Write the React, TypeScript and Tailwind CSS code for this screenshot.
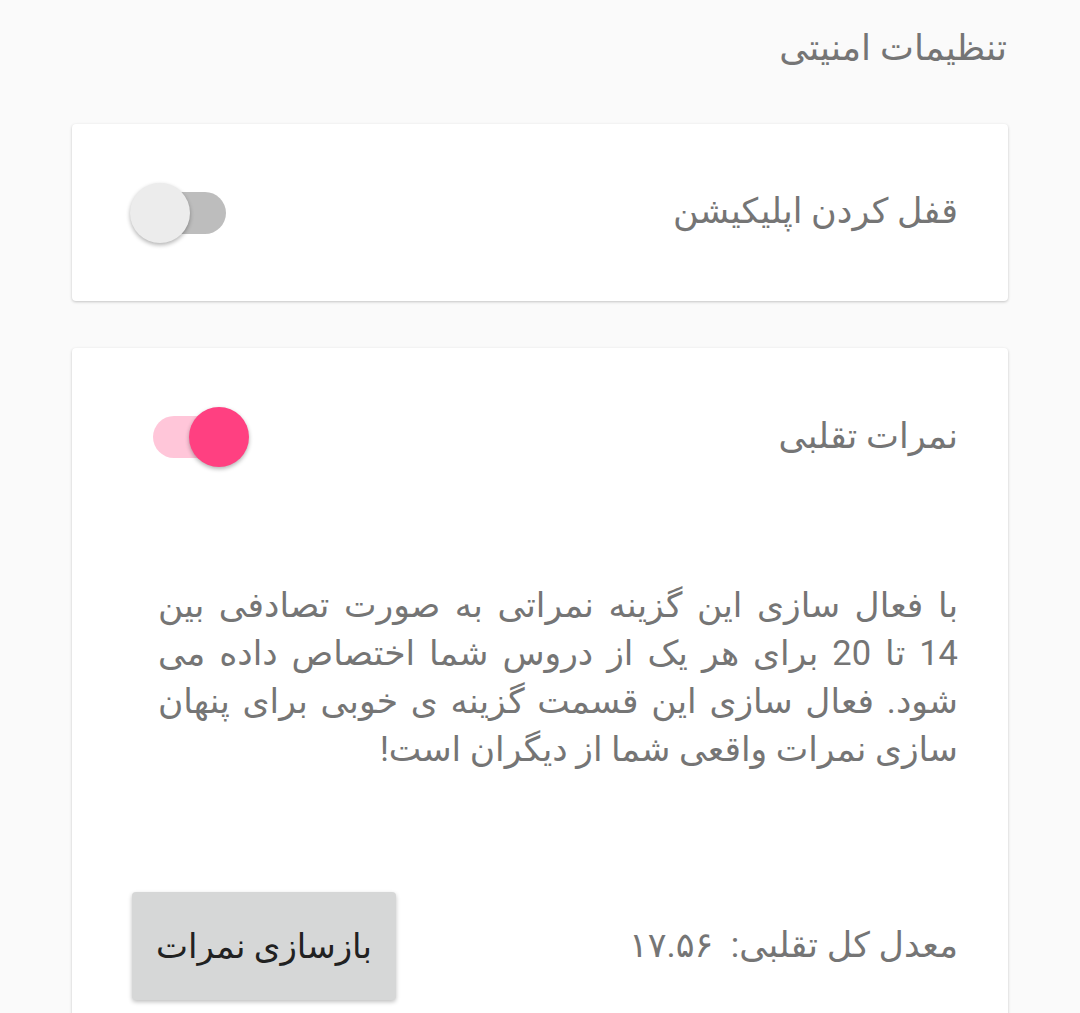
const Toggle = ({ on }: { on: boolean }) => {
  if (on) {
    return (
      <div className="relative w-[96px] h-[60px] shrink-0">
        <div className="absolute left-0 top-[9px] w-[91px] h-[42px] rounded-full bg-[#ffc6d9]" />
        <div className="absolute right-0 top-0 w-[60px] h-[60px] rounded-full bg-[#ff4081] shadow-[0_2px_4px_rgba(0,0,0,0.3)]" />
      </div>
    );
  }
  return (
    <div className="relative w-[96px] h-[60px] shrink-0">
      <div className="absolute right-0 top-[9px] w-[91px] h-[42px] rounded-full bg-[#bdbdbd]" />
      <div className="absolute left-0 top-0 w-[60px] h-[60px] rounded-full bg-[#ececec] shadow-[0_2px_4px_rgba(0,0,0,0.3)]" />
    </div>
  );
};

const lines = [
  "با فعال سازی این گزینه نمراتی به صورت تصادفی بین",
  "14 تا 20 برای هر یک از دروس شما اختصاص داده می",
  "شود. فعال سازی این قسمت گزینه ی خوبی برای پنهان",
];

const App = () => {
  return (
    <div
      dir="rtl"
      className="min-h-screen bg-[#fafafa] px-[72px] font-['Roboto','DejaVu_Sans',sans-serif] text-[#757575] overflow-hidden"
    >
      <h1 className="pt-[20px] h-[124px] text-[36px] leading-[56px] pr-px">
        تنظیمات امنیتی
      </h1>

      <div className="h-[177px] bg-white rounded-[4px] shadow-[0_1px_3px_rgba(0,0,0,0.22)] flex items-center justify-between pr-[50px] pl-[58px]">
        <span className="text-[35px]">قفل کردن اپلیکیشن</span>
        <Toggle on={false} />
      </div>

      <div className="mt-[47px] bg-white rounded-[4px] shadow-[0_1px_3px_rgba(0,0,0,0.22)] pr-[50px] pl-[60px] pt-[59px] pb-[40px]">
        <div className="flex items-center justify-between h-[60px]">
          <span className="text-[35px]">نمرات تقلبی</span>
          <div className="ml-[21px]">
            <Toggle on={true} />
          </div>
        </div>

        <div className="mt-[114px] pl-[26px] text-[34.5px] leading-[48px]">
          {lines.map((l) => (
            <p key={l} className="whitespace-nowrap text-justify [text-align-last:justify]">
              {l}
            </p>
          ))}
          <p className="whitespace-nowrap">سازی نمرات واقعی شما از دیگران است!</p>
        </div>

        <div className="mt-[119px] flex items-center justify-between">
          <span className="text-[35px]">معدل کل تقلبی:&nbsp; ۱۷.۵۶</span>
          <button className="w-[264px] h-[108px] rounded-[4px] bg-[#d6d7d7] text-[#212121] text-[34px] shadow-[0_2px_4px_rgba(0,0,0,0.25)]">
            بازسازی نمرات
          </button>
        </div>
      </div>
    </div>
  );
};

export default App;
